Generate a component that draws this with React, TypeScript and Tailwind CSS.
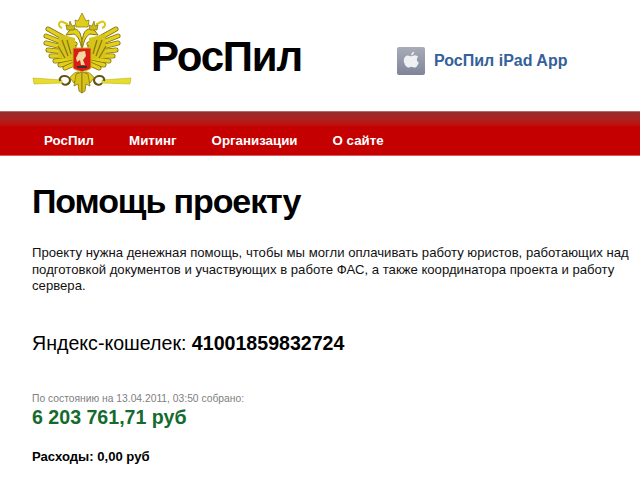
const sans = { fontFamily: '"Liberation Sans", Arial, sans-serif' };

const gold = "#e3d01c";
const dark = "#85750f";

// кончики перьев: от основания крыла к краю
const feathers = [
  [43, 44, 16, 29],
  [42, 47, 14, 36],
  [42, 50, 14, 43],
  [42, 53, 16, 50],
  [42, 56, 19, 56],
  [42, 59, 23, 61],
  [42, 62, 28, 65],
  [42, 64, 33, 68],
];

function HalfEagle() {
  return (
    <g>
      {feathers.map(([x1, y1, x2, y2]) => (
        <g key={`${x2}-${y2}`}>
          <line x1={x1} y1={y1} x2={x2} y2={y2} stroke={dark} strokeWidth="5" strokeLinecap="round" />
          <line x1={x1} y1={y1} x2={x2} y2={y2} stroke={gold} strokeWidth="3.4" strokeLinecap="round" />
        </g>
      ))}
      <path d="M43 38 L27 34 L26 58 L43 60 Z" fill="#d6c418" />
      <path d="M30 40 L36 56 M35 40 L39 54 M26 46 L33 58" stroke={dark} strokeWidth="1.2" fill="none" />
      {/* шея и голова */}
      <path d="M50 50 C48 40 46 36 42 34 L34 35 L37 31 C41 27 46 29 48 33 L50 40 Z" fill={gold} stroke={dark} strokeWidth="1" />
      {/* завиток у короны */}
      <path d="M30 28 C25 26 27 20 31 22 L35 24 L36 29" fill="none" stroke="#d8c617" strokeWidth="2" />
      {/* малая корона */}
      <path d="M35 30 L34 25 L37 26 L38 21 L40 26 L43 25 L42 30 Z" fill="#cbb916" stroke={dark} strokeWidth="0.7" />
      {/* держава и скипетр */}
      <path d="M1 78 L30 80 L30 83 L2 84 Z" fill="#e9dd2c" stroke="#b3a41a" strokeWidth="0.5" />
      <path d="M28 81 C26 75 37 74 38 80 C38 85 32 86 30 83" fill="none" stroke="#5f5410" strokeWidth="2" />
      {/* лапа */}
      <path d="M38 78 C41 73 44 72 47 72 L46 78 L42 83 Z" fill={gold} stroke={dark} strokeWidth="0.8" />
      <path d="M50 72 L44 74 L42 86 L46 84 L47 91 L50 93 Z" fill="#d6c418" stroke={dark} strokeWidth="0.8" />
    </g>
  );
}

function Emblem() {
  return (
    <svg width="100" height="96" viewBox="0 0 100 96" className="shrink-0">
      <HalfEagle />
      <g transform="matrix(-1 0 0 1 100 0)">
        <HalfEagle />
      </g>
      {/* большая корона */}
      <path d="M44 27 L43 20 L46 21 L48 17 L50 13 L52 17 L54 21 L57 20 L56 27 Z" fill="#e0ce1a" stroke={dark} strokeWidth="0.7" />
      {/* щит */}
      <path d="M41 48 L59 48 L59 67 C59 70 54 70 50 72 C46 70 41 70 41 67 Z" fill="#dc1c14" stroke="#c8b616" strokeWidth="1" />
      <path d="M47 52 L53 51 L54 56 L51 60 L53 65 L49 65 L48 60 L45 62 L44 58 Z" fill="#f3d9a0" />
      <path d="M45 67 L55 67" stroke="#333" strokeWidth="2" />
    </svg>
  );
}

function AppleTile() {
  return (
    <div className="flex h-[28px] w-[28px] shrink-0 items-center justify-center rounded-[2px] bg-gradient-to-b from-[#a9adb8] to-[#7f8499]">
      <svg width="18" height="20" viewBox="0 0 18 20">
        <path d="M9.2 5.2 C10.5 5.2 11.5 4.2 13 4.2 C14.3 4.2 15.5 5 16.2 6 C14.2 7.2 14.5 10.4 16.8 11.4 C16.1 13.6 14.4 16.6 12.6 16.6 C11.4 16.6 10.8 15.8 9.4 15.8 C8 15.8 7.3 16.6 6.2 16.6 C4.2 16.6 1.8 12.6 1.8 9.6 C1.8 6.2 4 4.4 6 4.4 C7.2 4.4 8.2 5.2 9.2 5.2 Z" fill="#eff0f3" />
        <path d="M9 4.2 C9 2.4 10.6 1 12.2 0.8 C12.3 2.7 10.7 4.2 9 4.2 Z" fill="#eff0f3" />
      </svg>
    </div>
  );
}

export default function App() {
  const menu = ["РосПил", "Митинг", "Организации", "О сайте"];

  return (
    <div className="h-[480px] w-[640px] overflow-hidden bg-white text-black" style={sans}>
      {/* шапка */}
      <div className="flex h-[111px] items-start">
        <div className="ml-[32px] w-[119px]">
          <Emblem />
        </div>
        <div className="mt-[36px] w-[246px] text-[42px] leading-none font-bold tracking-[-1.2px]">РосПил</div>
        <div className="mt-[47px] flex items-center gap-[9px]">
          <AppleTile />
          <span className="text-[16px] font-bold text-[#35609b]">РосПил iPad App</span>
        </div>
      </div>

      {/* меню */}
      <div className="h-[45px] border-t border-b border-t-[#b56a6a] border-b-[#dc5a5a] bg-gradient-to-b from-[#962c2c] to-[#c40000] to-35%">
        <div className="flex gap-[35px] pt-[21px] pl-[44px] text-[13.3px] leading-[15px] font-bold text-white">
          {menu.map((item) => (
            <span key={item}>{item}</span>
          ))}
        </div>
      </div>

      {/* контент */}
      <div className="px-[32px]">
        <h1 className="mt-[25px] text-[34px] leading-[40px] font-bold tracking-[-1.1px]">Помощь проекту</h1>
        <p className="mt-[24px] w-[600px] text-[13.15px] leading-[16.5px] text-[#111]">
          Проекту нужна денежная помощь, чтобы мы могли оплачивать работу юристов, работающих над подготовкой документов и участвующих в работе ФАС, а также координатора проекта и работу сервера.
        </p>
        <p className="mt-[37px] text-[19.6px] leading-[22px]">
          Яндекс-кошелек: <b>41001859832724</b>
        </p>
        <p className="mt-[38px] text-[10.3px] leading-[13px] text-[#808080]">По состоянию на 13.04.2011, 03:50 собрано:</p>
        <p className="mt-[1px] text-[19.6px] leading-[23px] font-bold text-[#146b2e]">6 203 761,71 руб</p>
        <p className="mt-[20px] text-[13.1px] leading-[15px] font-bold">Расходы: 0,00 руб</p>
      </div>
    </div>
  );
}
